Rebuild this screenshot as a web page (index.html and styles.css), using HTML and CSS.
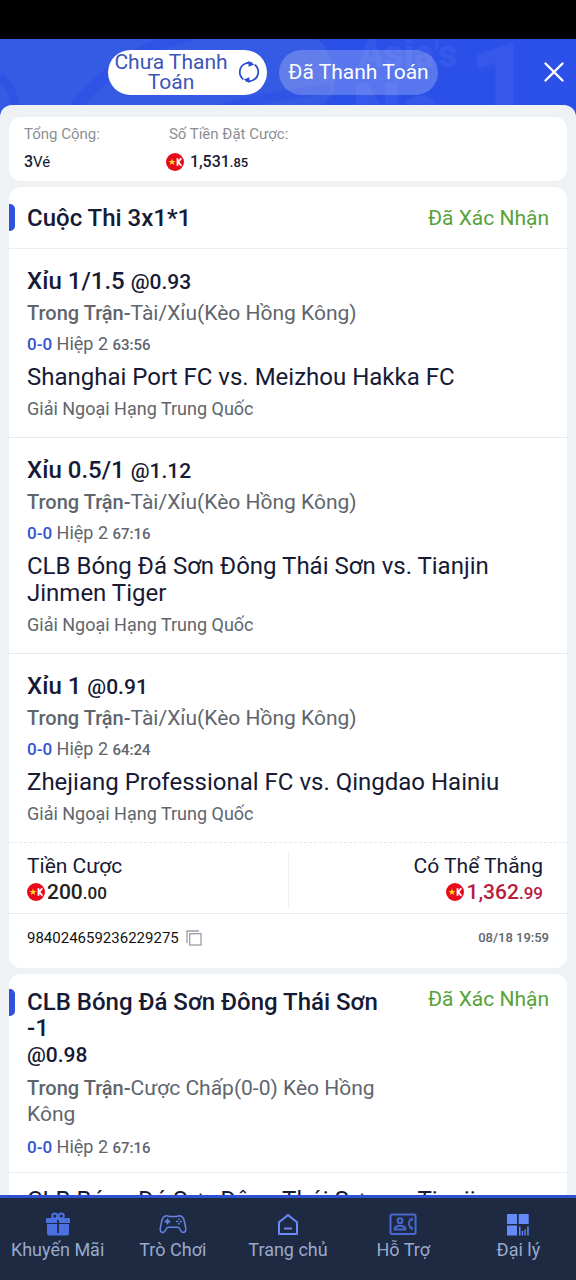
FILE: index.html
```html
<!DOCTYPE html>
<html lang="vi">
<head>
<meta charset="utf-8">
<meta name="viewport" content="width=device-width, initial-scale=1">
<title>Vé Cược</title>
<link rel="stylesheet" href="styles.css">
</head>
<body>
<svg class="defs" aria-hidden="true">
  <symbol id="coin" viewBox="0 0 18 18">
    <circle cx="9" cy="9" r="9" fill="#e60a1c"/>
    <path d="M6 5.400l.9 2.500h2.600L7.400 9.500l.8 2.600L6 10.600l-2.200 1.500.8-2.600L2.500 7.900h2.600z" fill="#ffe11a"/>
    <path d="M11.500 5.200v7.600M15.300 5.200l-3 3.800 3.100 3.800" fill="none" stroke="#fff" stroke-width="1.800"/>
  </symbol>
</svg>
<div class="app">
  <div class="statusbar"></div>
  <header class="topbar">
    <svg class="topbar-art" viewBox="0 0 576 80" preserveAspectRatio="xMidYMin slice" aria-hidden="true">
      <path d="M0 0H315Q326 2 333 26Q345 60 300 80H0z" fill="#3a5de3" opacity=".75"/>
      <path d="M75 68Q120 12 190 -4" fill="none" stroke="#2f53e5" stroke-width="12"/>
      <path d="M0 38Q14 48 16 72" fill="none" stroke="#2f53e5" stroke-width="8"/>
      <path d="M222 70Q260 58 330 50" fill="none" stroke="#2f53e5" stroke-width="10"/>
      <g class="art-text">
        <text x="358" y="28" font-size="38">Asia's</text>
        <text x="352" y="94" font-size="70">No</text>
        <text x="468" y="83" font-size="112">1</text>
      </g>
    </svg>
    <nav class="tabs">
      <button class="tab tab-active" type="button">
        <span>Chưa Thanh Toán</span>
        <svg width="22" height="22" viewBox="0 0 22 22" fill="none" stroke="#2c50cf" stroke-width="1.800">
          <path d="M5.300 18.300A9.200 9.200 0 0 1 7.600 2.500Q11 1 14.200 2.600"/>
          <path d="M16.700 3.700A9.200 9.200 0 0 1 14.400 19.500Q11 21 7.800 19.400"/>
          <path d="M10.500 0l6 3.400-6 2.400zM11.500 22l-6-3.400 6-2.400z" fill="#2c50cf" stroke="none"/>
        </svg>
      </button>
      <button class="tab" type="button"><span>Đã Thanh Toán</span></button>
    </nav>
    <button class="close" type="button" aria-label="Đóng">
      <svg width="20" height="20" viewBox="0 0 20 20" fill="none" stroke="#fff" stroke-width="2.400" stroke-linecap="round"><path d="M1.500 1.500l17 17M18.500 1.500l-17 17"/></svg>
    </button>
  </header>

  <main class="content">
    <section class="card summary">
      <div class="total">
        <div class="caption">Tổng Cộng:</div>
        <div class="figure"><b>3</b>Vé</div>
      </div>
      <div class="total">
        <div class="caption caption-inset">Số Tiền Đặt Cược:</div>
        <div class="figure figure-money"><svg class="coin"><use href="#coin"/></svg><span><b>1,531</b><small>.85</small></span></div>
      </div>
    </section>

    <article class="card">
      <div class="card-head">
        <h2>Cuộc Thi 3x1*1</h2>
        <span class="state">Đã Xác Nhận</span>
      </div>
      <section class="leg">
        <h3>Xỉu 1/1.5 <span class="odds">@0.93</span></h3>
        <p class="market"><b>Trong Trận-</b>Tài/Xỉu(Kèo Hồng Kông)</p>
        <p class="score"><b>0-0</b> Hiệp 2 <span class="clock">63:56</span></p>
        <p class="match">Shanghai Port FC vs. Meizhou Hakka FC</p>
        <p class="league">Giải Ngoại Hạng Trung Quốc</p>
      </section>
      <section class="leg">
        <h3>Xỉu 0.5/1 <span class="odds">@1.12</span></h3>
        <p class="market"><b>Trong Trận-</b>Tài/Xỉu(Kèo Hồng Kông)</p>
        <p class="score"><b>0-0</b> Hiệp 2 <span class="clock">67:16</span></p>
        <p class="match">CLB Bóng Đá Sơn Đông Thái Sơn vs. Tianjin Jinmen Tiger</p>
        <p class="league">Giải Ngoại Hạng Trung Quốc</p>
      </section>
      <section class="leg leg-last">
        <h3>Xỉu 1 <span class="odds">@0.91</span></h3>
        <p class="market"><b>Trong Trận-</b>Tài/Xỉu(Kèo Hồng Kông)</p>
        <p class="score"><b>0-0</b> Hiệp 2 <span class="clock">64:24</span></p>
        <p class="match">Zhejiang Professional FC vs. Qingdao Hainiu</p>
        <p class="league">Giải Ngoại Hạng Trung Quốc</p>
      </section>
      <div class="stakes">
        <div class="stake">
          <div class="stake-label">Tiền Cược</div>
          <div class="amount"><svg class="coin"><use href="#coin"/></svg><span>200<small>.00</small></span></div>
        </div>
        <div class="stake stake-win">
          <div class="stake-label">Có Thể Thắng</div>
          <div class="amount"><svg class="coin"><use href="#coin"/></svg><span>1,362<small>.99</small></span></div>
        </div>
      </div>
      <footer class="ticket">
        <span class="ticket-id">984024659236229275</span>
        <button class="copy" type="button" aria-label="Sao chép">
          <svg width="16" height="16" viewBox="0 0 16 16" fill="none" stroke="#9a9fa6" stroke-width="1.300"><path d="M1 13V1h12"/><rect x="3.700" y="3.700" width="11.300" height="11.300"/></svg>
        </button>
        <time class="ticket-time">08/18 19:59</time>
      </footer>
    </article>

    <article class="card">
      <div class="card-head card-head-single">
        <div class="pick">
          <h2>CLB Bóng Đá Sơn Đông Thái Sơn -1<br><span class="odds">@0.98</span></h2>
          <p class="market"><b>Trong Trận-</b>Cược Chấp(0-0) Kèo Hồng Kông</p>
          <p class="score"><b>0-0</b> Hiệp 2 <span class="clock">67:16</span></p>
        </div>
        <span class="state">Đã Xác Nhận</span>
      </div>
      <section class="leg leg-single">
        <p class="match">CLB Bóng Đá Sơn Đông Thái Sơn vs. Tianjin Jinmen Tiger</p>
      </section>
    </article>
  </main>

  <nav class="bottom">
    <a href="#"><svg width="26" height="24" viewBox="0 0 26 24"><g fill="#4c70e2"><path d="M2 6h22a1 1 0 0 1 1 1v4H1V7a1 1 0 0 1 1-1zM2 12h22v9.500a2 2 0 0 1-2 2H4a2 2 0 0 1-2-2z"/></g><g fill="none" stroke="#4c70e2" stroke-width="2"><circle cx="9.800" cy="4" r="2.600"/><circle cx="16.200" cy="4" r="2.600"/></g><path d="M13 8v13" stroke="#1e2a42" stroke-width="1.800"/></svg>Khuyến Mãi</a>
    <a href="#"><svg width="28" height="24" viewBox="0 0 28 24" fill="none" stroke="#6684e6" stroke-width="1.500" stroke-linejoin="round" stroke-linecap="round"><path d="M6.500 4Q8 3.300 10 4.400h8Q20 3.300 21.500 4Q24 4.500 25 8l1.800 8.500Q27 20.500 24 20.500Q22.300 20.300 20.500 16.500Q19.800 15.300 18.500 15.300h-9Q8.200 15.300 7.500 16.500Q5.700 20.300 4 20.500Q1 20.500 1.200 16.500L3 8Q4 4.500 6.500 4z"/><path d="M8.500 7.500v4M6.500 9.500h4" stroke-width="1.800"/><path d="M20 7v.6M20 11.400v.6M17.700 9.500h.6M21.700 9.500h.6" stroke-width="1.600"/></svg>Trò Chơi</a>
    <a href="#"><svg width="22" height="24" viewBox="0 0 22 24" fill="none" stroke="#6c88fa" stroke-width="2" stroke-linejoin="round"><path d="M2 10.200L11 3l9 7.200V22H2z"/><path d="M7 16.500h8"/></svg>Trang chủ</a>
    <a href="#"><svg width="28" height="24" viewBox="0 0 28 24" fill="none" stroke="#4868cf" stroke-width="2"><rect x="1.500" y="2.500" width="25" height="19.500" rx="1.500"/><circle cx="11" cy="8.700" r="2.400"/><path d="M5.500 17.500Q6 13.800 11 13.800T16.500 17.500z" stroke-linejoin="round"/><path d="M23.500 6.500Q19.500 8 20 12T23.500 17.300" stroke-width="1.800"/><path d="M22.500 6v3M22.500 14.500v3"/></svg>Hỗ Trợ</a>
    <a href="#"><svg width="24" height="24" viewBox="0 0 24 24" fill="#658afa"><path d="M1 2h10v10H1zM12.700 2h10v10h-10zM1 13.500h10v10H1zM13 14.500h1.500v9H13zM15.800 19h1.300v4.500h-1.300zM18.400 17.500h1.300v6h-1.300zM21.200 14.500h1.500v9h-1.500z"/></svg>Đại lý</a>
  </nav>
</div>
</body>
</html>
```
FILE: styles.css
```css
* { box-sizing: border-box; }
body {
  margin: 0;
  font-family: Roboto, "Liberation Sans", sans-serif;
  color: #161a35;
  background: #2a50e8;
}
h2, h3, p { margin: 0; }
h2, h3 { font-weight: 500; }
button { border: 0; background: none; padding: 0; font: inherit; cursor: pointer; }
small { font-size: inherit; }
.defs { position: absolute; width: 0; height: 0; }

.app { height: 100vh; display: flex; flex-direction: column; overflow: hidden; }
.statusbar { height: 39px; background: #000; flex: none; }

.topbar {
  position: relative;
  flex: none;
  display: flex;
  align-items: center;
  height: 66px;
  padding-right: 12px;
  background: #2a50e8;
}
.topbar-art { position: absolute; left: 0; top: 0; width: 100%; height: 80px; }
.art-text { font-family: Roboto, sans-serif; font-weight: 900; fill: #3558ea; }
.tabs { position: relative; flex: 1; display: flex; justify-content: center; gap: 12px; }
.tab {
  display: flex;
  align-items: center;
  justify-content: center;
  width: 159px;
  height: 45px;
  border-radius: 23px;
  background: rgba(255, 255, 255, .22);
  color: #fff;
  font-size: 21px;
  line-height: 20px;
}
.tab-active { background: #fff; color: #3b55b8; justify-content: space-between; padding: 0 7px 0 6px; }
.tab-active span { flex: 1; }
.tab-active svg { flex: none; margin-left: 10px; }
.close { position: relative; width: 18px; display: flex; justify-content: flex-end; flex: none; }
.close svg { flex: none; }

.content {
  position: relative;
  flex: 1;
  min-height: 0;
  overflow: hidden;
  display: flex;
  flex-direction: column;
  gap: 6px;
  padding: 12px 9px 0;
  border-radius: 12px 12px 0 0;
  background: #eef2f5;
}
.card { flex: none; background: #fff; border-radius: 12px; }

.summary { display: flex; gap: 66px; padding: 6px 15px 4px; }
.caption { font-size: 15px; line-height: 22px; color: #8b8f94; }
.caption-inset { padding-left: 3px; }
.figure { display: flex; align-items: center; height: 30px; margin-top: 2px; font-size: 15px; line-height: 24px; }
.figure b { font-size: 16px; font-weight: 500; }
.figure small { font-size: 13px; font-weight: 500; }
.figure-money { gap: 6px; }
.coin { width: 18px; height: 18px; flex: none; }

.card-head {
  display: flex;
  padding: 16px 18px 15px 0;
  border-bottom: 1px solid #eceff2;
}
.card-head::before {
  content: "";
  flex: none;
  width: 6px;
  height: 27px;
  margin: 1px 12px 0 0;
  border-radius: 0 5px 5px 0;
  background: #2f52dd;
}
.card-head h2 { font-size: 24px; line-height: 30px; }
.state { margin-left: auto; font-size: 21px; line-height: 30px; color: #57a239; white-space: nowrap; }

.leg { padding: 17px 18px 16px; border-bottom: 1px solid #e6eaee; }
.leg h3 { font-size: 24px; line-height: 30px; }
.leg-last { border-bottom-style: dashed; }
.odds { font-size: 21px; line-height: 1; }
.market { font-size: 21px; line-height: 26px; color: #60656d; margin-top: 4px; }
.market b { font-weight: 500; font-size: 20px; line-height: 1; }
.score { font-size: 18px; line-height: 24px; color: #60656d; margin-top: 6px; }
.score b { font-weight: 500; font-size: 17px; line-height: 1; color: #3353cf; }
.clock { font-weight: 500; font-size: 15px; line-height: 1; }
.match { font-size: 24px; line-height: 27px; margin-top: 8px; }
.league { font-size: 18px; line-height: 24px; color: #60656d; margin-top: 6px; }

.stakes { display: grid; grid-template-columns: 1fr 1fr; padding: 10px 0 6px; }
.stake { padding: 0 18px 2px; }
.stake-label { font-size: 21px; line-height: 26px; }
.amount { display: flex; align-items: center; gap: 2px; font-size: 21px; line-height: 26px; font-weight: 500; color: #222; }
.amount small { font-size: 17px; line-height: 1; }
.stake-win { border-left: 1px solid #eceff2; padding-right: 24px; text-align: right; }
.stake-win .amount { justify-content: flex-end; color: #b81c3f; }

.ticket { display: flex; align-items: center; padding: 12px 18px 18px; border-top: 1px solid #e6eaee; line-height: 24px; }
.ticket-id { font-size: 15px; color: #111; }
.copy { margin-left: 7px; display: flex; }
.ticket-time { margin-left: auto; font-size: 13px; color: #60656d; font-weight: 500; }

.card-head-single { padding: 15px 18px 13px 0; }
.card-head-single::before { margin-top: 0; }
.pick { flex: 1; max-width: 370px; }
.card-head-single h2 { line-height: 26px; }
.card-head-single .market, .card-head-single .score { margin-top: 8px; }
.card-head-single .state { line-height: 20px; }
.leg-single { padding-top: 14px; }
.leg-single .match { margin-top: 0; }

.bottom {
  position: relative;
  flex: none;
  display: flex;
  height: 85px;
  padding-top: 14px;
  border-top: 3px solid #2e51d2;
  background: #1e2a42;
}
.bottom a {
  flex: 1 1 0;
  display: flex;
  flex-direction: column;
  align-items: center;
  gap: 2px;
  font-size: 18px;
  line-height: 24px;
  color: #99a9cc;
  text-decoration: none;
  white-space: nowrap;
}
```
